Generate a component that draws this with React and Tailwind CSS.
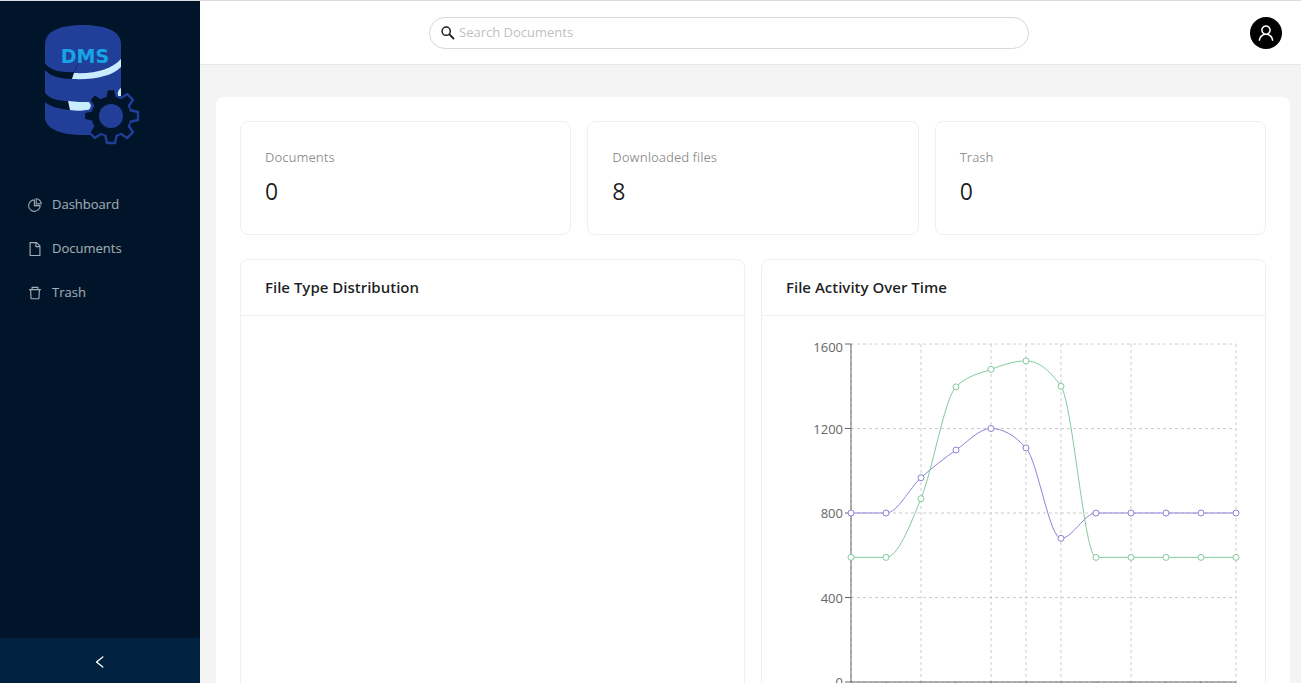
import React from "react";
import { AiOutlinePieChart, AiOutlineFile, AiOutlineDelete, AiOutlineUser, AiOutlineLeft } from "react-icons/ai";

const menu = [
  { label: "Dashboard", Icon: AiOutlinePieChart },
  { label: "Documents", Icon: AiOutlineFile },
  { label: "Trash", Icon: AiOutlineDelete },
];

const stats = [
  { label: "Documents", value: 0 },
  { label: "Downloaded files", value: 8 },
  { label: "Trash", value: 0 },
];

const uploads = [800, 800, 967, 1098, 1200, 1108, 680, 800, 800, 800, 800, 800];
const downloads = [590, 590, 868, 1397, 1480, 1520, 1400, 590, 590, 590, 590, 590];

const PLOT = { left: 65, top: 5, width: 385, height: 338, max: 1600 };
const GRID_COLUMNS = [0, 2, 4, 5, 6, 8, 11];
const Y_TICKS = [0, 400, 800, 1200, 1600];

const xAt = (i) => PLOT.left + (PLOT.width * i) / 11;
const yAt = (v) => PLOT.top + PLOT.height * (1 - v / PLOT.max);

// Monotone cubic interpolation through evenly spaced points.
function monotonePath(values) {
  const pts = values.map((v, i) => [xAt(i), yAt(v)]);
  const n = pts.length;
  const slope = (a, b) => (b[1] - a[1]) / (b[0] - a[0]);
  const t = pts.map((p, i) => {
    if (i === 0 || i === n - 1) return 0;
    const s0 = slope(pts[i - 1], p);
    const s1 = slope(p, pts[i + 1]);
    return (Math.sign(s0) + Math.sign(s1)) * Math.min(Math.abs(s0), Math.abs(s1), 0.25 * Math.abs(s0 + s1)) || 0;
  });
  let d = `M${pts[0][0]},${pts[0][1]}`;
  for (let i = 1; i < n; i++) {
    const [x0, y0] = pts[i - 1];
    const [x1, y1] = pts[i];
    const dx = (x1 - x0) / 3;
    d += `C${x0 + dx},${y0 + dx * t[i - 1]},${x1 - dx},${y1 - dx * t[i]},${x1},${y1}`;
  }
  return d;
}

function Series({ values, color }) {
  return (
    <g stroke={color} strokeWidth="1">
      <path d={monotonePath(values)} fill="none" />
      {values.map((v, i) => (
        <circle key={i} cx={xAt(i)} cy={yAt(v)} r="3" fill="#fff" />
      ))}
    </g>
  );
}

function ActivityChart() {
  const right = PLOT.left + PLOT.width;
  const bottom = PLOT.top + PLOT.height;
  return (
    <svg viewBox="0 0 455 400" className="block w-full overflow-visible" role="img" aria-label="File activity over time">
      <g stroke="#ccc" strokeDasharray="3 3">
        {Y_TICKS.map((v) => (
          <line key={v} x1={PLOT.left} x2={right} y1={yAt(v)} y2={yAt(v)} />
        ))}
        {GRID_COLUMNS.map((i) => (
          <line key={i} x1={xAt(i)} x2={xAt(i)} y1={PLOT.top} y2={bottom} />
        ))}
      </g>
      <g stroke="#666">
        <line x1={PLOT.left} x2={PLOT.left} y1={PLOT.top} y2={bottom} />
        <line x1={PLOT.left} x2={right} y1={bottom} y2={bottom} />
        {Y_TICKS.map((v) => (
          <line key={v} x1={PLOT.left - 6} x2={PLOT.left} y1={yAt(v)} y2={yAt(v)} />
        ))}
        {uploads.map((_, i) => (
          <line key={i} x1={xAt(i)} x2={xAt(i)} y1={bottom} y2={bottom + 6} />
        ))}
      </g>
      <g fill="#666" fontSize="13" textAnchor="end">
        {Y_TICKS.map((v) => (
          <text key={v} x={PLOT.left - 8} y={Math.max(yAt(v), 8) + 5}>{v}</text>
        ))}
      </g>
      <Series values={uploads} color="#8884d8" />
      <Series values={downloads} color="#82ca9d" />
    </svg>
  );
}

function Logo() {
  const teeth = [0, 45, 90, 135, 180, 225, 270, 315];
  return (
    <svg width="130" height="145" viewBox="0 0 130 145" role="img" aria-label="DMS">
      <path d="M15 34C15 21 31 15 53 15S91 21 91 34V110C91 119 75 125 53 125S15 119 15 107Z" fill="#213f99" />
      <path d="M15 53C19 60 31 63 44 62L42 69C30 69 20 66 15 60Z" fill="#001529" />
      <path d="M44 63C66 64 82 59 91 49V57C83 66 64 70 42 69Z" fill="#c9edff" />
      <path d="M15 83C20 89 28 91 39 91L40 100C29 99 19 96 15 92Z" fill="#001529" />
      <path d="M38 91C46 92 52 92 59 92C62 94 61 97 59 100C52 101 46 101 40 100Z" fill="#c9edff" />
      <path d="M91 78L91 86H88C87 82 89 79 91 78Z" fill="#c9edff" />
      <path d="M44 62L50 50L46 43" fill="none" stroke="#17296d" strokeWidth="1" />
      <g fill="#001529" stroke="#213f99" strokeWidth="2.4" strokeLinejoin="round">
        <circle cx="81" cy="106" r="20" />
        {teeth.map((a) => (
          <path key={a} d="M75 88L77 79H85L87 88" transform={`rotate(${a} 81 106)`} />
        ))}
      </g>
      <circle cx="81" cy="106" r="19.5" fill="#001529" />
      <circle cx="81" cy="106" r="12" fill="#213f99" />
      <text x="55" y="53" textAnchor="middle" fontSize="19" fontWeight="700" fill="#16a5e6" className="font-['DejaVu_Sans',sans-serif]">DMS</text>
    </svg>
  );
}

function Panel({ title, children }) {
  return (
    <section className="min-h-[480px] rounded-lg border border-[#f0f0f0]">
      <h2 className="flex h-14 items-center border-b border-[#f0f0f0] px-6 text-[15px] font-semibold text-black/88">{title}</h2>
      <div className="px-6 pt-[23px] pb-6">{children}</div>
    </section>
  );
}

export default function App() {
  return (
    <div className="flex h-screen overflow-hidden border-t border-[#dcdce0] bg-[#f4f4f4] font-['Open_Sans',sans-serif] text-[13px] text-black/88">
      <aside className="flex w-[200px] shrink-0 flex-col bg-[#001529]">
        <div className="px-[30px] pt-[9px]">
          <Logo />
        </div>
        <nav className="mt-[30px] flex flex-col gap-1 px-1">
          {menu.map(({ label, Icon }) => (
            <a key={label} href="#" className="flex h-10 items-center gap-[9px] rounded-lg px-[23px] text-white/65">
              <Icon size={16} />
              {label}
            </a>
          ))}
        </nav>
        <button type="button" aria-label="Collapse sidebar" className="mt-auto flex h-[45px] items-center justify-center bg-[#002140] pt-0.5 text-white">
          <AiOutlineLeft size={16} />
        </button>
      </aside>

      <div className="flex min-w-0 flex-1 flex-col">
        <header className="flex h-16 shrink-0 items-center border-b border-[#e8e8e8] bg-white pr-[19px] pl-2">
          <div className="flex flex-1 justify-center">
            <label className="flex h-8 w-[600px] items-center gap-1 rounded-full border border-[#d9d9d9] px-[11px]">
              <svg width="14" height="14" viewBox="0 0 14 14" fill="none" stroke="#1f1f1f" aria-hidden="true">
                <circle cx="5.2" cy="5.2" r="4.1" strokeWidth="1.5" />
                <path d="M8.2 8.2L13 13" strokeWidth="1.8" />
              </svg>
              <input type="text" aria-label="Search Documents" placeholder="Search Documents" className="min-w-0 flex-1 outline-none placeholder:text-[#bfbfbf]" />
            </label>
          </div>
          <button type="button" aria-label="Account" className="flex size-8 items-center justify-center rounded-full bg-black text-white">
            <AiOutlineUser size={20} />
          </button>
        </header>

        <main className="min-h-0 flex-1 overflow-hidden pt-8 pr-[11px] pl-4">
          <div className="rounded-lg bg-white p-6">
            <div className="grid grid-cols-3 gap-4">
              {stats.map(({ label, value }) => (
                <section key={label} className="rounded-lg border border-[#f0f0f0] p-6">
                  <div className="leading-[22px] text-black/45">{label}</div>
                  <div className="mt-1 text-[23px] leading-[38px]">{value}</div>
                </section>
              ))}
            </div>
            <div className="mt-6 grid grid-cols-2 gap-4">
              <Panel title="File Type Distribution" />
              <Panel title="File Activity Over Time">
                <ActivityChart />
              </Panel>
            </div>
          </div>
        </main>
      </div>
    </div>
  );
}
